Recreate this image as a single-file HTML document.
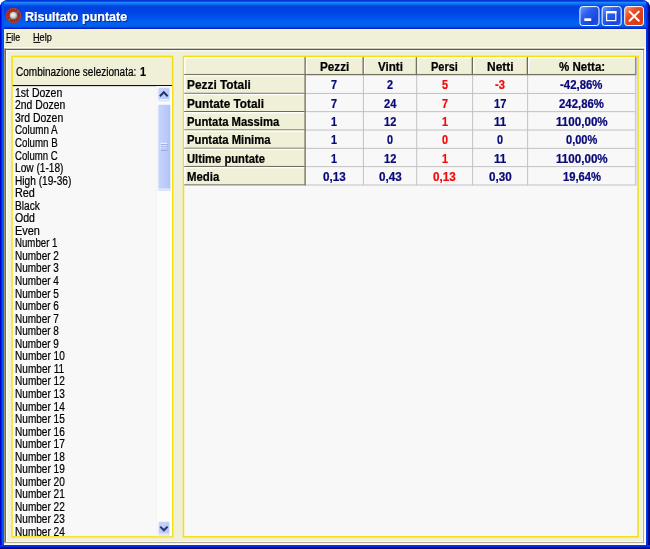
<!DOCTYPE html>
<html><head><meta charset="utf-8"><title>Risultato puntate</title>
<style>
html,body{margin:0;padding:0;background:#fff;}
body{width:650px;height:549px;overflow:hidden;position:relative;font-family:"Liberation Sans",sans-serif;}
.t{position:absolute;white-space:pre;line-height:14px;color:#000;margin:0;padding:0;transform-origin:0 0;-webkit-text-stroke:0.22px currentColor;}
#win{position:absolute;left:0;top:0;width:650px;height:549px;background:#0831d9;border-radius:8px 8px 0 0;overflow:hidden;will-change:transform;}
#lb{position:absolute;left:0;top:0;width:4px;height:549px;background:linear-gradient(90deg,#0000d0 0,#0008d4 1.2px,#0054f0 1.9px,#0058f0 2.8px,#0848e0 4px);}
#rb{position:absolute;left:646px;top:0;width:4px;height:549px;background:linear-gradient(90deg,#0838f0 0,#0030e8 1.3px,#0014a8 2.1px,#000484 2.8px,#000080 4px);}
#bb{position:absolute;left:0;top:545px;width:650px;height:4px;background:linear-gradient(180deg,#0838f0 0,#0028e8 1.5px,#0014a8 2.4px,#000484 3.1px,#000080 4px);}
#title{position:absolute;left:0;top:0;width:650px;height:29px;background:linear-gradient(180deg,#0830d8 0,#0834da 1px,#0c54e6 1.6px,#1888f8 2.5px,#0e70f0 4px,#0248e4 6px,#0040e0 7.5px,#0044e4 12px,#004cec 16px,#0058f0 20px,#0064f0 24.5px,#0058ea 26.5px,#0038d4 27.8px,#0020c4 28.6px,#0020c4 29px);}
#client{position:absolute;left:4px;top:29px;width:642px;height:516px;background:#f0efd8;}
#menu{position:absolute;left:4px;top:29px;width:642px;height:18px;background:linear-gradient(180deg,#fff4dc 0,#fbf2da 1px,#f0efd8 2px);}
#deco{position:absolute;left:0;top:0;}
</style></head><body>
<div id="win">
<div id="title"></div>
<div id="lb"></div><div id="rb"></div><div id="bb"></div>
<div id="client"></div>
<div id="menu"></div>

<svg id="deco" width="650" height="549" viewBox="0 0 650 549">
<rect x="4.00" y="45.90" width="642.00" height="1.00" fill="#f3ead6"/>
<rect x="4.00" y="46.90" width="642.00" height="1.60" fill="#fafaf8"/>
<rect x="3.90" y="48.73" width="640.70" height="1.25" fill="#5f5840"/>
<rect x="6.00" y="50.20" width="637.00" height="1.10" fill="#fafafa"/>
<rect x="3.90" y="48.70" width="1.10" height="494.60" fill="#a09870"/>
<rect x="4.98" y="48.70" width="0.95" height="493.90" fill="#606060"/>
<rect x="6.00" y="49.90" width="1.20" height="492.10" fill="#fdfdfa"/>
<rect x="642.05" y="50.20" width="0.90" height="491.80" fill="#fbfbe6"/>
<rect x="643.00" y="49.90" width="1.20" height="493.40" fill="#b0a898"/>
<rect x="644.25" y="48.70" width="1.60" height="496.30" fill="#fffdf2"/>
<rect x="7.20" y="541.15" width="635.80" height="0.90" fill="#fbfbe6"/>
<rect x="4.00" y="542.05" width="640.20" height="1.20" fill="#b0a898"/>
<rect x="4.00" y="543.35" width="642.00" height="1.60" fill="#fffef4"/>
<rect x="12.1" y="56.4" width="160.5" height="480.4" fill="#f0efd8" stroke="#f4e010" stroke-width="1.5"/>
<rect x="183.5" y="56.4" width="454.5" height="480.4" fill="#f8f8f8" stroke="#f4e010" stroke-width="1.5"/>
<rect x="12.78" y="86.10" width="159.14" height="450.02" fill="#f8f8f8"/>
<rect x="12.78" y="85.07" width="159.14" height="1.05" fill="#000"/>
<rect x="156.60" y="86.10" width="15.32" height="450.02" fill="#fcfcfb"/>
<rect x="156.10" y="86.10" width="0.60" height="450.00" fill="#f3eeee"/>
<defs><linearGradient id="sb" x1="0" y1="0" x2="1" y2="1"><stop offset="0" stop-color="#c9d6fd"/><stop offset="1" stop-color="#b3c5f8"/></linearGradient><linearGradient id="th" x1="0" y1="0" x2="1" y2="0"><stop offset="0" stop-color="#c7d5fc"/><stop offset="0.7" stop-color="#b9c9f9"/><stop offset="1" stop-color="#adbff5"/></linearGradient></defs>
<rect x="157.90" y="88.70" width="12.10" height="12.70" rx="1.4" fill="#dbe2f6"/>
<rect x="158.00" y="87.40" width="11.90" height="12.10" rx="1.6" fill="url(#sb)" stroke="#eef2ff" stroke-width="0.9"/>
<rect x="157.90" y="105.70" width="12.80" height="85.20" rx="1.4" fill="#dbe2f6"/>
<rect x="158.00" y="104.40" width="12.60" height="84.60" rx="1.6" fill="url(#th)" stroke="#eef2ff" stroke-width="0.9"/>
<rect x="158.20" y="522.80" width="11.50" height="13.00" rx="1.4" fill="#dbe2f6"/>
<rect x="158.30" y="521.50" width="11.30" height="12.40" rx="1.6" fill="url(#sb)" stroke="#eef2ff" stroke-width="0.9"/>
<path d="M159.9 96.3 L163.8 92.3 L167.7 96.3" fill="none" stroke="#26366c" stroke-width="2"/>
<path d="M160.2 526.6 L163.9 530.3 L167.6 526.6" fill="none" stroke="#26366c" stroke-width="2"/>
<rect x="160.50" y="142.88" width="6.60" height="1.05" fill="#ffffff"/>
<rect x="160.90" y="143.88" width="6.60" height="0.95" fill="#7a92de"/>
<rect x="160.50" y="144.78" width="6.60" height="1.05" fill="#ffffff"/>
<rect x="160.90" y="145.78" width="6.60" height="0.95" fill="#7a92de"/>
<rect x="160.50" y="146.68" width="6.60" height="1.05" fill="#ffffff"/>
<rect x="160.90" y="147.68" width="6.60" height="0.95" fill="#7a92de"/>
<rect x="160.50" y="148.57" width="6.60" height="1.05" fill="#ffffff"/>
<rect x="160.90" y="149.57" width="6.60" height="0.95" fill="#7a92de"/>
<rect x="184.25" y="57.15" width="451.20" height="17.45" fill="#f0efd8"/>
<rect x="184.25" y="57.15" width="120.95" height="127.70" fill="#f0efd8"/>
<rect x="305.70" y="92.95" width="330.15" height="1.00" fill="#c2c2c2"/>
<rect x="305.70" y="111.15" width="330.15" height="1.00" fill="#c2c2c2"/>
<rect x="305.70" y="129.55" width="330.15" height="1.00" fill="#c2c2c2"/>
<rect x="305.70" y="147.85" width="330.15" height="1.00" fill="#c2c2c2"/>
<rect x="305.70" y="166.10" width="330.15" height="1.00" fill="#c2c2c2"/>
<rect x="305.70" y="184.50" width="330.15" height="1.00" fill="#c2c2c2"/>
<rect x="362.90" y="75.10" width="1.00" height="110.35" fill="#c2c2c2"/>
<rect x="416.20" y="75.10" width="1.00" height="110.35" fill="#c2c2c2"/>
<rect x="472.10" y="75.10" width="1.00" height="110.35" fill="#c2c2c2"/>
<rect x="527.10" y="75.10" width="1.00" height="110.35" fill="#c2c2c2"/>
<rect x="634.90" y="75.20" width="0.90" height="110.25" fill="#c4c4c4"/>
<rect x="635.80" y="75.20" width="1.00" height="110.25" fill="#d8d8f6"/>
<rect x="184.25" y="57.15" width="120.45" height="1.30" fill="#ffffff"/>
<rect x="184.20" y="57.20" width="1.30" height="16.80" fill="#ffffff"/>
<rect x="305.70" y="57.15" width="57.10" height="1.30" fill="#ffffff"/>
<rect x="305.65" y="57.20" width="1.30" height="16.80" fill="#ffffff"/>
<rect x="363.80" y="57.15" width="52.30" height="1.30" fill="#ffffff"/>
<rect x="363.75" y="57.20" width="1.30" height="16.80" fill="#ffffff"/>
<rect x="417.10" y="57.15" width="54.90" height="1.30" fill="#ffffff"/>
<rect x="417.05" y="57.20" width="1.30" height="16.80" fill="#ffffff"/>
<rect x="473.00" y="57.15" width="54.00" height="1.30" fill="#ffffff"/>
<rect x="472.95" y="57.20" width="1.30" height="16.80" fill="#ffffff"/>
<rect x="528.00" y="57.15" width="106.95" height="1.30" fill="#ffffff"/>
<rect x="527.95" y="57.20" width="1.30" height="16.80" fill="#ffffff"/>
<rect x="304.05" y="57.30" width="0.70" height="16.70" fill="#b8b096"/>
<rect x="304.68" y="57.15" width="1.05" height="17.95" fill="#6c6a5c"/>
<rect x="362.15" y="57.30" width="0.70" height="16.70" fill="#b8b096"/>
<rect x="362.78" y="57.15" width="1.05" height="17.95" fill="#6c6a5c"/>
<rect x="415.45" y="57.30" width="0.70" height="16.70" fill="#b8b096"/>
<rect x="416.08" y="57.15" width="1.05" height="17.95" fill="#6c6a5c"/>
<rect x="471.35" y="57.30" width="0.70" height="16.70" fill="#b8b096"/>
<rect x="471.98" y="57.15" width="1.05" height="17.95" fill="#6c6a5c"/>
<rect x="526.35" y="57.30" width="0.70" height="16.70" fill="#b8b096"/>
<rect x="526.98" y="57.15" width="1.05" height="17.95" fill="#6c6a5c"/>
<rect x="184.25" y="73.95" width="451.70" height="1.30" fill="#77755f"/>
<rect x="634.98" y="57.15" width="0.95" height="18.05" fill="#86867a"/>
<rect x="635.90" y="57.15" width="0.90" height="18.05" fill="#a8a8d6"/>
<rect x="184.25" y="75.20" width="120.45" height="1.30" fill="#ffffff"/>
<rect x="184.20" y="75.25" width="1.30" height="17.55" fill="#ffffff"/>
<rect x="184.25" y="92.80" width="121.45" height="1.00" fill="#6c6a5c"/>
<rect x="184.25" y="93.90" width="120.45" height="1.30" fill="#ffffff"/>
<rect x="184.20" y="93.95" width="1.30" height="17.05" fill="#ffffff"/>
<rect x="184.25" y="111.00" width="121.45" height="1.00" fill="#6c6a5c"/>
<rect x="184.25" y="112.10" width="120.45" height="1.30" fill="#ffffff"/>
<rect x="184.20" y="112.15" width="1.30" height="17.25" fill="#ffffff"/>
<rect x="184.25" y="129.40" width="121.45" height="1.00" fill="#6c6a5c"/>
<rect x="184.25" y="130.50" width="120.45" height="1.30" fill="#ffffff"/>
<rect x="184.20" y="130.55" width="1.30" height="17.15" fill="#ffffff"/>
<rect x="184.25" y="147.70" width="121.45" height="1.00" fill="#6c6a5c"/>
<rect x="184.25" y="148.80" width="120.45" height="1.30" fill="#ffffff"/>
<rect x="184.20" y="148.85" width="1.30" height="17.10" fill="#ffffff"/>
<rect x="184.25" y="165.95" width="121.45" height="1.00" fill="#6c6a5c"/>
<rect x="184.25" y="167.05" width="120.45" height="1.30" fill="#ffffff"/>
<rect x="184.20" y="167.10" width="1.30" height="17.25" fill="#ffffff"/>
<rect x="184.25" y="184.35" width="121.45" height="1.00" fill="#6c6a5c"/>
<rect x="304.05" y="75.30" width="0.70" height="109.05" fill="#b8b096"/>
<rect x="304.68" y="74.60" width="1.05" height="110.75" fill="#6c6a5c"/>
</svg>
<svg style="position:absolute;left:5px;top:7px" width="17" height="17" viewBox="0 0 17 17">
<defs><radialGradient id="g1" cx="45%" cy="42%" r="60%"><stop offset="0" stop-color="#fafafa"/><stop offset="0.6" stop-color="#cfcfcf"/><stop offset="1" stop-color="#8a8a8a"/></radialGradient></defs>
<circle cx="8.5" cy="8.5" r="7.55" fill="#c62e1e"/>
<circle cx="8.5" cy="8.5" r="5.9" fill="none" stroke="#6a2a24" stroke-width="2.6" stroke-dasharray="1.0 1.47"/>
<circle cx="8.5" cy="8.5" r="7.1" fill="none" stroke="#b04434" stroke-width="0.9"/>
<path d="M3.6 13.4 L13.4 3.6" stroke="#8f8f8f" stroke-width="0.8"/>
<circle cx="8.5" cy="8.5" r="4.1" fill="#8c5a50"/>
<circle cx="8.5" cy="8.5" r="3.6" fill="url(#g1)"/>
</svg>
<div id="caption"><span class="t" style="left:24.90px;top:10.00px;font-size:12.5px;transform:scaleX(1.0007);font-weight:bold;color:#fff;text-shadow:1px 1px 0 #0a2a8a;">Risultato puntate</span></div>
<svg id="capbtns" style="position:absolute;left:575px;top:0" width="75" height="30" viewBox="575 0 75 30">
<defs>
<linearGradient id="gb" x1="0" y1="0" x2="1" y2="1"><stop offset="0" stop-color="#6e9cff"/><stop offset="0.35" stop-color="#2c60f0"/><stop offset="0.75" stop-color="#1644dc"/><stop offset="1" stop-color="#2c5cec"/></linearGradient>
<linearGradient id="gx" x1="0" y1="0" x2="1" y2="1"><stop offset="0" stop-color="#f6a088"/><stop offset="0.35" stop-color="#ea4c24"/><stop offset="0.75" stop-color="#d83a12"/><stop offset="1" stop-color="#e45026"/></linearGradient>
</defs>
<rect x="579.9" y="6.6" width="19.1" height="18.9" rx="2.6" fill="url(#gb)" stroke="#fff" stroke-width="1"/>
<rect x="602.1" y="6.6" width="19.1" height="18.9" rx="2.6" fill="url(#gb)" stroke="#fff" stroke-width="1"/>
<rect x="624.7" y="6.6" width="18.8" height="18.9" rx="2.6" fill="url(#gx)" stroke="#fff" stroke-width="1"/>
<rect x="584.3" y="18.3" width="6.9" height="2.7" fill="#fff"/>
<rect x="606.6" y="11.6" width="9.2" height="9" fill="none" stroke="#fff" stroke-width="1.2"/>
<rect x="606" y="11" width="10.4" height="2.4" fill="#fff"/>
<path d="M629.6 11.6 L638.8 20.8 M638.8 11.6 L629.6 20.8" stroke="#fff" stroke-width="2" stroke-linecap="round" fill="none"/>
</svg>
<div id="menubar"><span class="t" style="left:5.70px;top:30.50px;font-size:10.3px;transform:scaleX(0.8538);">File</span><span class="t" style="left:33.40px;top:30.50px;font-size:10.3px;transform:scaleX(0.8858);">Help</span></div>
<svg style="position:absolute;left:0;top:38px" width="60" height="8" viewBox="0 38 60 8"><rect x="5.7" y="41.9" width="5.8" height="1" fill="#000"/><rect x="33.4" y="41.9" width="7" height="1" fill="#000"/></svg>
<div id="leftpanel"><span class="t" style="left:16.00px;top:65.00px;font-size:12px;transform:scaleX(0.8348);">Combinazione selezionata:</span><span class="t" style="left:140.25px;top:65.00px;font-size:12px;transform:scaleX(0.9000);font-weight:bold;">1</span>
<div id="list" style="position:absolute;left:0;top:0;width:172px;height:536.1px;overflow:hidden">
<div class="t" style="left:14.90px;top:86.00px;font-size:12px;transform:scaleX(0.8753);">1st Dozen</div>
<div class="t" style="left:14.90px;top:98.00px;font-size:12px;transform:scaleX(0.8646);">2nd Dozen</div>
<div class="t" style="left:14.90px;top:111.00px;font-size:12px;transform:scaleX(0.8703);">3rd Dozen</div>
<div class="t" style="left:14.90px;top:123.00px;font-size:12px;transform:scaleX(0.8200);">Column A</div>
<div class="t" style="left:14.90px;top:136.00px;font-size:12px;transform:scaleX(0.8086);">Column B</div>
<div class="t" style="left:14.90px;top:149.00px;font-size:12px;transform:scaleX(0.7991);">Column C</div>
<div class="t" style="left:14.90px;top:161.00px;font-size:12px;transform:scaleX(0.8455);">Low (1-18)</div>
<div class="t" style="left:14.90px;top:174.00px;font-size:12px;transform:scaleX(0.8441);">High (19-36)</div>
<div class="t" style="left:14.90px;top:186.00px;font-size:12px;transform:scaleX(0.9044);">Red</div>
<div class="t" style="left:14.90px;top:199.00px;font-size:12px;transform:scaleX(0.8470);">Black</div>
<div class="t" style="left:14.90px;top:211.00px;font-size:12px;transform:scaleX(0.8770);">Odd</div>
<div class="t" style="left:14.90px;top:224.00px;font-size:12px;transform:scaleX(0.9109);">Even</div>
<div class="t" style="left:14.90px;top:236.00px;font-size:12px;transform:scaleX(0.8055);">Number 1</div>
<div class="t" style="left:14.90px;top:249.00px;font-size:12px;transform:scaleX(0.8319);">Number 2</div>
<div class="t" style="left:14.90px;top:261.00px;font-size:12px;transform:scaleX(0.8319);">Number 3</div>
<div class="t" style="left:14.90px;top:274.00px;font-size:12px;transform:scaleX(0.8319);">Number 4</div>
<div class="t" style="left:14.90px;top:287.00px;font-size:12px;transform:scaleX(0.8319);">Number 5</div>
<div class="t" style="left:14.90px;top:299.00px;font-size:12px;transform:scaleX(0.8319);">Number 6</div>
<div class="t" style="left:14.90px;top:312.00px;font-size:12px;transform:scaleX(0.8319);">Number 7</div>
<div class="t" style="left:14.90px;top:324.00px;font-size:12px;transform:scaleX(0.8319);">Number 8</div>
<div class="t" style="left:14.90px;top:337.00px;font-size:12px;transform:scaleX(0.8319);">Number 9</div>
<div class="t" style="left:14.90px;top:349.00px;font-size:12px;transform:scaleX(0.8394);">Number 10</div>
<div class="t" style="left:14.90px;top:362.00px;font-size:12px;transform:scaleX(0.8402);">Number 11</div>
<div class="t" style="left:14.90px;top:374.00px;font-size:12px;transform:scaleX(0.8394);">Number 12</div>
<div class="t" style="left:14.90px;top:387.00px;font-size:12px;transform:scaleX(0.8394);">Number 13</div>
<div class="t" style="left:14.90px;top:400.00px;font-size:12px;transform:scaleX(0.8394);">Number 14</div>
<div class="t" style="left:14.90px;top:412.00px;font-size:12px;transform:scaleX(0.8394);">Number 15</div>
<div class="t" style="left:14.90px;top:425.00px;font-size:12px;transform:scaleX(0.8394);">Number 16</div>
<div class="t" style="left:14.90px;top:437.00px;font-size:12px;transform:scaleX(0.8394);">Number 17</div>
<div class="t" style="left:14.90px;top:450.00px;font-size:12px;transform:scaleX(0.8394);">Number 18</div>
<div class="t" style="left:14.90px;top:462.00px;font-size:12px;transform:scaleX(0.8394);">Number 19</div>
<div class="t" style="left:14.90px;top:475.00px;font-size:12px;transform:scaleX(0.8394);">Number 20</div>
<div class="t" style="left:14.90px;top:487.00px;font-size:12px;transform:scaleX(0.8394);">Number 21</div>
<div class="t" style="left:14.90px;top:500.00px;font-size:12px;transform:scaleX(0.8394);">Number 22</div>
<div class="t" style="left:14.90px;top:512.00px;font-size:12px;transform:scaleX(0.8394);">Number 23</div>
<div class="t" style="left:14.90px;top:525.00px;font-size:12px;transform:scaleX(0.8394);">Number 24</div>
</div></div>
<div id="grid">
<div class="hrow"><span class="t" style="left:319.60px;top:60.00px;font-size:12px;transform:scaleX(0.9772);font-weight:bold;">Pezzi</span><span class="t" style="left:377.60px;top:60.00px;font-size:12px;transform:scaleX(0.9667);font-weight:bold;">Vinti</span><span class="t" style="left:430.70px;top:60.00px;font-size:12px;transform:scaleX(0.9166);font-weight:bold;">Persi</span><span class="t" style="left:486.90px;top:60.00px;font-size:12px;transform:scaleX(0.9988);font-weight:bold;">Netti</span><span class="t" style="left:558.80px;top:60.00px;font-size:12px;transform:scaleX(0.9615);font-weight:bold;">% Netta:</span></div>
<div class="row"><span class="t" style="left:187.40px;top:78.00px;font-size:12px;transform:scaleX(0.9888);font-weight:bold;">Pezzi Totali</span><span class="t" style="left:331.40px;top:78.00px;font-size:12px;transform:scaleX(0.9000);font-weight:bold;color:#080878;">7</span><span class="t" style="left:387.10px;top:78.00px;font-size:12px;transform:scaleX(0.9000);font-weight:bold;color:#080878;">2</span><span class="t" style="left:441.70px;top:78.00px;font-size:12px;transform:scaleX(0.9000);font-weight:bold;color:#f40808;">5</span><span class="t" style="left:495.20px;top:78.00px;font-size:12px;transform:scaleX(0.9276);font-weight:bold;color:#f40808;">-3</span><span class="t" style="left:560.38px;top:78.00px;font-size:12px;transform:scaleX(0.9506);font-weight:bold;color:#080878;">-42,86%</span></div>
<div class="row"><span class="t" style="left:187.40px;top:97.00px;font-size:12px;transform:scaleX(0.9819);font-weight:bold;">Puntate Totali</span><span class="t" style="left:331.40px;top:97.00px;font-size:12px;transform:scaleX(0.9000);font-weight:bold;color:#080878;">7</span><span class="t" style="left:383.95px;top:97.00px;font-size:12px;transform:scaleX(0.9215);font-weight:bold;color:#080878;">24</span><span class="t" style="left:441.70px;top:97.00px;font-size:12px;transform:scaleX(0.9000);font-weight:bold;color:#f40808;">7</span><span class="t" style="left:494.00px;top:97.00px;font-size:12px;transform:scaleX(0.9215);font-weight:bold;color:#080878;">17</span><span class="t" style="left:559.17px;top:97.00px;font-size:12px;transform:scaleX(0.9475);font-weight:bold;color:#080878;">242,86%</span></div>
<div class="row"><span class="t" style="left:187.40px;top:115.00px;font-size:12px;transform:scaleX(0.9414);font-weight:bold;">Puntata Massima</span><span class="t" style="left:331.40px;top:115.00px;font-size:12px;transform:scaleX(0.9000);font-weight:bold;color:#080878;">1</span><span class="t" style="left:383.95px;top:115.00px;font-size:12px;transform:scaleX(0.9215);font-weight:bold;color:#080878;">12</span><span class="t" style="left:441.70px;top:115.00px;font-size:12px;transform:scaleX(0.9000);font-weight:bold;color:#f40808;">1</span><span class="t" style="left:494.00px;top:115.00px;font-size:12px;transform:scaleX(0.9684);font-weight:bold;color:#080878;">11</span><span class="t" style="left:555.77px;top:115.00px;font-size:12px;transform:scaleX(0.9681);font-weight:bold;color:#080878;">1100,00%</span></div>
<div class="row"><span class="t" style="left:187.40px;top:133.00px;font-size:12px;transform:scaleX(0.9427);font-weight:bold;">Puntata Minima</span><span class="t" style="left:331.40px;top:133.00px;font-size:12px;transform:scaleX(0.9000);font-weight:bold;color:#080878;">1</span><span class="t" style="left:387.10px;top:133.00px;font-size:12px;transform:scaleX(0.9000);font-weight:bold;color:#080878;">0</span><span class="t" style="left:441.70px;top:133.00px;font-size:12px;transform:scaleX(0.9000);font-weight:bold;color:#f40808;">0</span><span class="t" style="left:497.15px;top:133.00px;font-size:12px;transform:scaleX(0.9000);font-weight:bold;color:#080878;">0</span><span class="t" style="left:565.98px;top:133.00px;font-size:12px;transform:scaleX(0.9198);font-weight:bold;color:#080878;">0,00%</span></div>
<div class="row"><span class="t" style="left:187.40px;top:152.00px;font-size:12px;transform:scaleX(0.9347);font-weight:bold;">Ultime puntate</span><span class="t" style="left:331.40px;top:152.00px;font-size:12px;transform:scaleX(0.9000);font-weight:bold;color:#080878;">1</span><span class="t" style="left:383.95px;top:152.00px;font-size:12px;transform:scaleX(0.9215);font-weight:bold;color:#080878;">12</span><span class="t" style="left:441.70px;top:152.00px;font-size:12px;transform:scaleX(0.9000);font-weight:bold;color:#f40808;">1</span><span class="t" style="left:494.00px;top:152.00px;font-size:12px;transform:scaleX(0.9684);font-weight:bold;color:#080878;">11</span><span class="t" style="left:555.77px;top:152.00px;font-size:12px;transform:scaleX(0.9681);font-weight:bold;color:#080878;">1100,00%</span></div>
<div class="row"><span class="t" style="left:187.40px;top:170.00px;font-size:12px;transform:scaleX(0.9495);font-weight:bold;">Media</span><span class="t" style="left:323.05px;top:170.00px;font-size:12px;transform:scaleX(0.9712);font-weight:bold;color:#080878;">0,13</span><span class="t" style="left:378.75px;top:170.00px;font-size:12px;transform:scaleX(0.9712);font-weight:bold;color:#080878;">0,43</span><span class="t" style="left:433.35px;top:170.00px;font-size:12px;transform:scaleX(0.9712);font-weight:bold;color:#f40808;">0,13</span><span class="t" style="left:488.80px;top:170.00px;font-size:12px;transform:scaleX(0.9712);font-weight:bold;color:#080878;">0,30</span><span class="t" style="left:562.57px;top:170.00px;font-size:12px;transform:scaleX(0.9359);font-weight:bold;color:#080878;">19,64%</span></div>
</div>
</div></body></html>
